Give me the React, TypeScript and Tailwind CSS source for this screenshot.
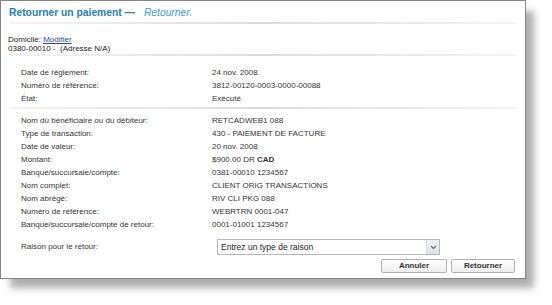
import React from "react";

const Sep = () => (
  <div className="mx-[8px] h-[2px] bg-gradient-to-r from-[#f4f4f4] via-[#dcdcdc] to-[#f4f4f4]" />
);

const Row = ({ label, children }: { label: string; children: React.ReactNode }) => (
  <div className="flex h-[13px] items-center">
    <div className="w-[191px] shrink-0">{label}</div>
    <div>{children}</div>
  </div>
);

export default function App() {
  return (
    <div className="h-[305px] w-[552px] bg-white" style={{ fontFamily: '"Liberation Sans", Arial, sans-serif' }}>
      <div className="h-[279px] w-[526px] border border-[#858585] bg-white text-[8px] text-[#333] shadow-[9px_10px_7px_-1px_rgba(0,0,0,0.32)]">
        <div className="flex h-[18px] items-end px-[8px] pb-[1px]">
          <span className="text-[10.3px] font-bold leading-none text-[#1a80c6]">Retourner un paiement —</span>
          <span className="ml-[9px] text-[10.3px] italic leading-none text-[#3a9ad8]">Retourner.</span>
        </div>
        <div className="mt-[3px]"><Sep /></div>
        <div className="px-[7px] pt-[11px] leading-[9px] text-[#222]">
          <div>
            Domicile: <span className="text-[#1f4f8f] underline">Modifier</span>
          </div>
          <div>0380-00010 -&nbsp; (Adresse N/A)</div>
        </div>
        <div className="mt-[1px]"><Sep /></div>
        <div className="pl-[20px] pt-[10px]">
          <Row label="Date de règlement:">24 nov. 2008</Row>
          <Row label="Numéro de référence:">3812-00120-0003-0000-00088</Row>
          <Row label="État:">Exécuté</Row>
        </div>
        <div className="mt-[2px]"><Sep /></div>
        <div className="pl-[20px] pt-[5px]">
          <Row label="Nom du bénéficiaire ou du débiteur:">RETCADWEB1 088</Row>
          <Row label="Type de transaction:">430 - PAIEMENT DE FACTURE</Row>
          <Row label="Date de valeur:">20 nov. 2008</Row>
          <Row label="Montant:">
            $900.00 DR <b>CAD</b>
          </Row>
          <Row label="Banque/succursale/compte:">0381-00010 1234567</Row>
          <Row label="Nom complet:">CLIENT ORIG TRANSACTIONS</Row>
          <Row label="Nom abrégé:">RIV CLI PKG 088</Row>
          <Row label="Numéro de référence:">WEBRTRN 0001-047</Row>
          <Row label="Banque/succursale/compte de retour:">0001-01001 1234567</Row>
          <div className="mt-[8px] flex h-[16px] items-center">
            <div className="w-[196px] shrink-0">Raison pour le retour:</div>
            <div className="flex h-[16px] w-[223px] items-center border border-[#b4b9c0] bg-white">
              <span className="flex-1 pl-[3px] text-[8.5px] text-[#222]">Entrez un type de raison</span>
              <div className="flex h-[14px] w-[13px] items-center justify-center border-l border-[#d6d9dd] bg-gradient-to-b from-[#f2f3f5] to-[#dfe2e6]">
                <svg width="7" height="5" viewBox="0 0 7 5">
                  <path d="M1 1 L3.5 3.5 L6 1" stroke="#666" strokeWidth="1.1" fill="none" />
                </svg>
              </div>
            </div>
          </div>
        </div>
        <div className="mr-[10px] mt-[4px] flex justify-end gap-[4px]">
          <button className="h-[14px] w-[66px] rounded-[2px] border border-[#b0b0b0] bg-gradient-to-b from-white to-[#ececec] text-[8px] font-bold text-[#333]">
            Annuler
          </button>
          <button className="h-[14px] w-[64px] rounded-[2px] border border-[#b0b0b0] bg-gradient-to-b from-white to-[#ececec] text-[8px] font-bold text-[#333]">
            Retourner
          </button>
        </div>
      </div>
    </div>
  );
}
